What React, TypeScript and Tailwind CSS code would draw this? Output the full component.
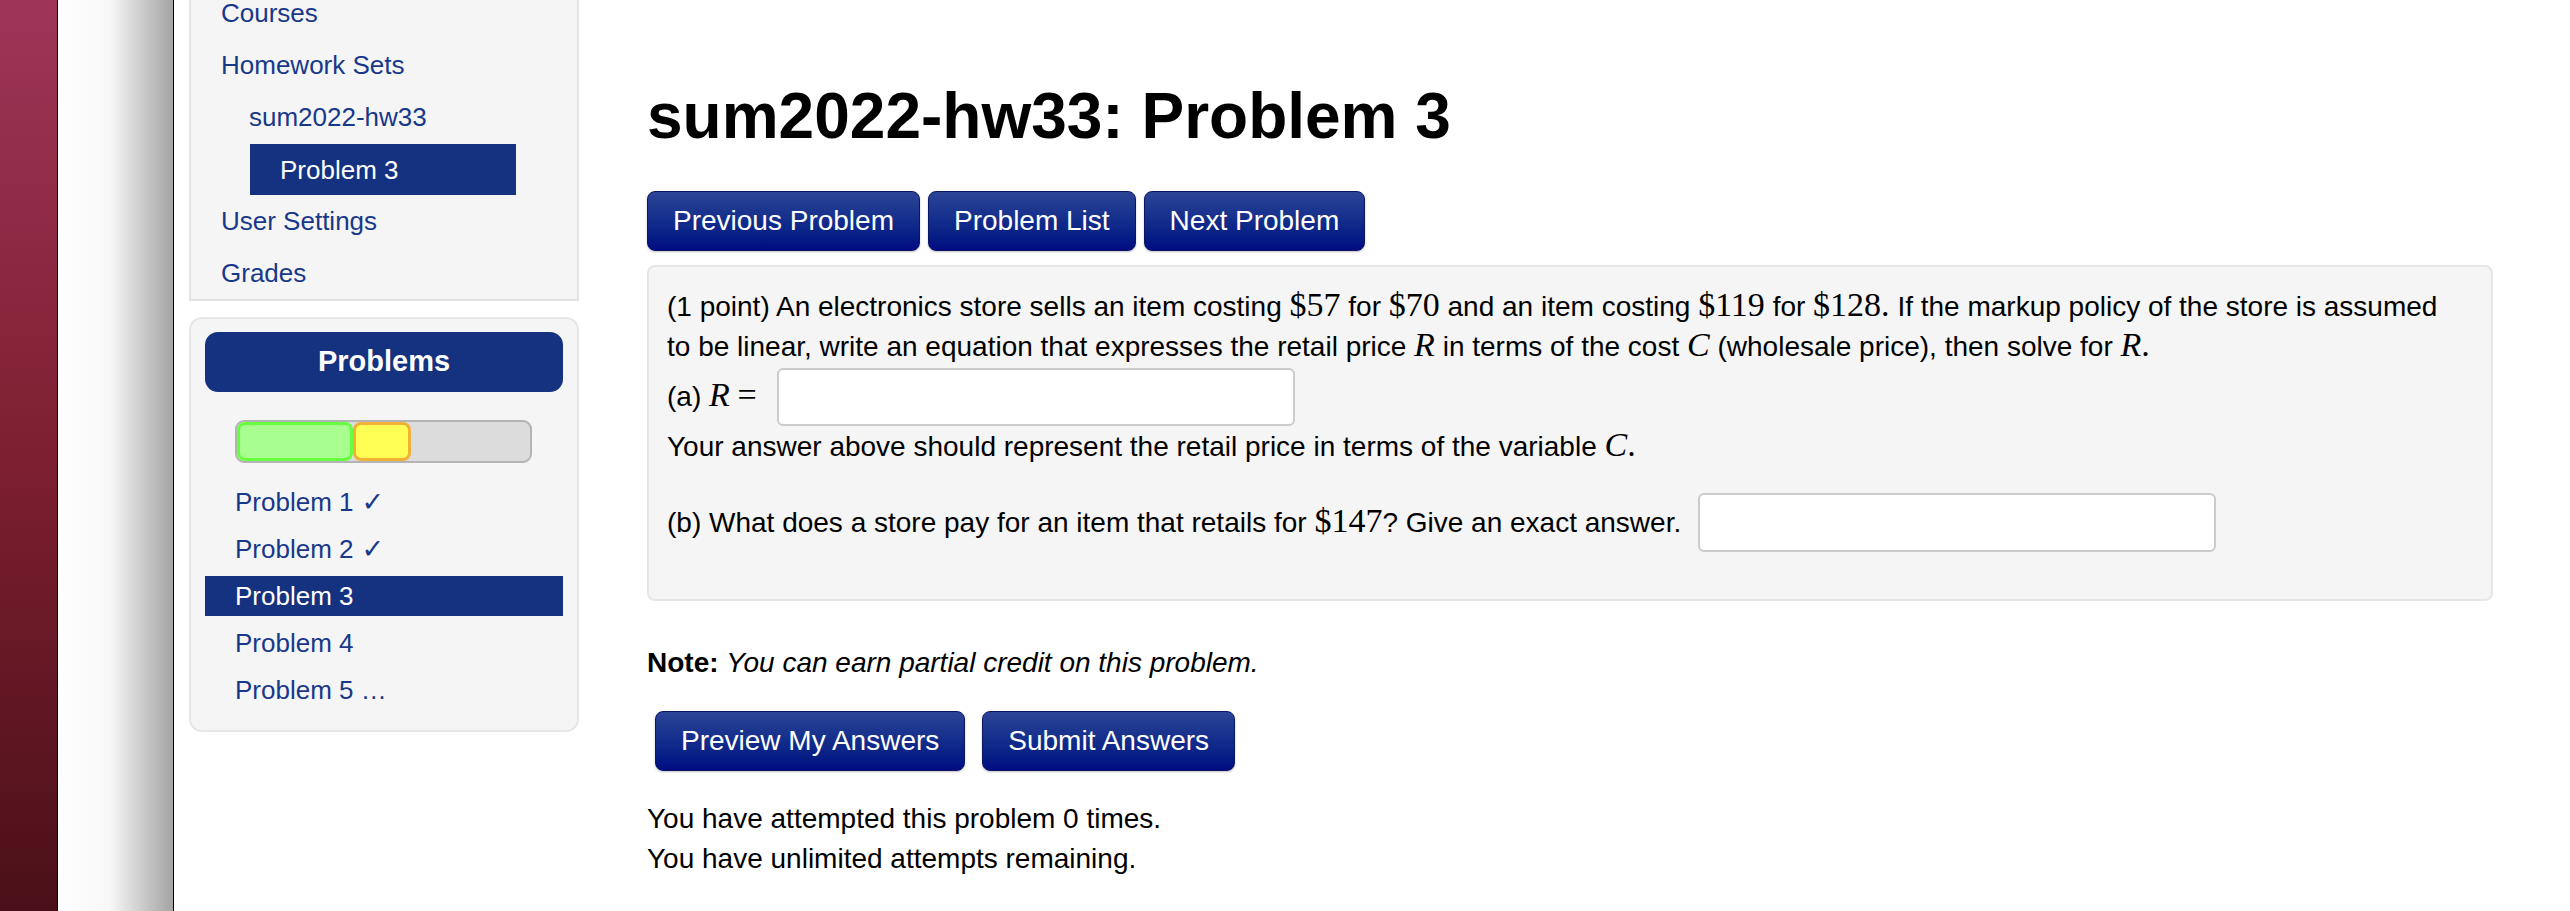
import type { ReactNode } from 'react';

const navLinks = ['Courses', 'Homework Sets'];
const problems = [
  { label: 'Problem 1', done: true, active: false },
  { label: 'Problem 2', done: true, active: false },
  { label: 'Problem 3', done: false, active: true },
  { label: 'Problem 4', done: false, active: false },
  { label: 'Problem 5 …', done: false, active: false },
];

// math in the problem text (MathJax-like serif)
function M({ children }: { children: ReactNode }) {
  return <span className="font-['Liberation_Serif',serif] text-[34px] leading-none">{children}</span>;
}

function MI({ children }: { children: ReactNode }) {
  return <span className="font-['Liberation_Serif',serif] text-[34px] leading-none italic">{children}</span>;
}

function BlueButton({ children }: { children: ReactNode }) {
  return (
    <button className="h-[60px] rounded-[8px] border border-[#0b1764] bg-linear-to-b from-[#2b4496] to-[#020a80] px-[25px] text-[28px] leading-[40px] text-white shadow-[0_1px_2px_rgba(0,0,0,0.25)]">
      {children}
    </button>
  );
}

export default function App() {
  return (
    <div className="flex h-screen w-full overflow-hidden bg-white font-['Liberation_Sans',Helvetica,Arial,sans-serif] text-black">
      {/* desktop edge + window shadow */}
      <div className="w-[58px] shrink-0 border-r border-black bg-linear-to-b from-[#9e3559] via-[#7e1f30] to-[#4a1019]" />
      <div className="w-[116px] shrink-0 border-r border-black bg-linear-to-r from-white via-[#f7f7f7] via-45% to-[#a4a4a4]" />

      <div className="flex flex-1 items-start">
        {/* sidebar */}
        <aside className="ml-[15px] flex w-[390px] shrink-0 flex-col gap-[16px]">
          <nav className="-mt-[13px] border-2 border-t-0 border-[#e3e3e3] bg-[#f5f5f5] text-[26px] leading-[40px] text-[#18388a]">
            {navLinks.map((l) => (
              <div key={l} className="px-[30px] py-[6px]">
                {l}
              </div>
            ))}
            <div className="py-[6px] pl-[58px]">sum2022-hw33</div>
            <div className="ml-[59px] mt-[1px] flex h-[51px] w-[266px] items-center bg-[#14327f] px-[30px] text-white">
              Problem 3
            </div>
            <div className="px-[30px] py-[6px]">User Settings</div>
            <div className="px-[30px] py-[6px]">Grades</div>
          </nav>

          <div className="rounded-[13px] border-2 border-[#e6e6e6] bg-[#f5f5f5] px-[14px] pb-[20px] pt-[13px]">
            <div className="flex h-[60px] items-center justify-center rounded-[13px] bg-[#14327f] text-[29px] font-bold text-white">
              Problems
            </div>
            <div className="ml-[30px] mt-[28px] flex h-[43px] w-[297px] rounded-[9px] border-2 border-[#b4b4b4] bg-[#dcdcdc]">
              <div className="w-[116px] rounded-[8px] border-[3px] border-[#66ff40] bg-[#a8ff90]" />
              <div className="w-[58px] rounded-[8px] border-[3px] border-[#f2b134] bg-[#ffff55]" />
            </div>
            <ul className="mt-[19px] flex flex-col gap-[7px] text-[26px] leading-[40px]">
              {problems.map((p) => (
                <li
                  key={p.label}
                  className={p.active ? 'h-[40px] bg-[#14327f] pl-[30px] text-white' : 'h-[40px] pl-[30px] text-[#18388a]'}
                >
                  {p.label}
                  {p.done && (
                    <span className="ml-[8px] font-['DejaVu_Sans',sans-serif] text-[27px] font-bold leading-none">✓</span>
                  )}
                </li>
              ))}
            </ul>
          </div>
        </aside>

        {/* main */}
        <main className="ml-[68px] flex-1 pr-[77px] text-[28px] leading-[40px]">
          <h1 className="pt-[81px] text-[64px] font-bold leading-[70px]">sum2022-hw33: Problem 3</h1>

          <div className="mt-[40px] flex gap-[8px]">
            <BlueButton>Previous Problem</BlueButton>
            <BlueButton>Problem List</BlueButton>
            <BlueButton>Next Problem</BlueButton>
          </div>

          <div className="mt-[14px] rounded-[8px] border-2 border-[#e6e6e6] bg-[#f5f5f5] px-[18px] pb-[47px] pt-[20px]">
            <p>
              (1 point) An electronics store sells an item costing <M>$57</M> for <M>$70</M> and an item costing{' '}
              <M>$119</M> for <M>$128.</M> If the markup policy of the store is assumed
              <br />
              to be linear, write an equation that expresses the retail price <MI>R</MI> in terms of the cost{' '}
              <MI>C</MI> (wholesale price), then solve for <MI>R</MI>
              <M>.</M>
            </p>
            <div className="flex h-[60px] items-center">
              <span className="w-[110px] shrink-0">
                (a) <MI>R</MI> <M>=</M>
              </span>
              <input className="h-[58px] w-[518px] rounded-[6px] border-2 border-[#cbcbcb] bg-white" />
            </div>
            <p>
              Your answer above should represent the retail price in terms of the variable <MI>C</MI>
              <M>.</M>
            </p>
            <div className="mt-[26px] flex h-[59px] items-center">
              <span>
                (b) What does a store pay for an item that retails for <M>$147</M>? Give an exact answer.
              </span>
              <input className="ml-[17px] h-[59px] w-[518px] rounded-[6px] border-2 border-[#cbcbcb] bg-white" />
            </div>
          </div>

          <p className="mt-[42px]">
            <b>Note:</b> <i>You can earn partial credit on this problem.</i>
          </p>

          <div className="ml-[8px] mt-[28px] flex gap-[17px]">
            <BlueButton>Preview My Answers</BlueButton>
            <BlueButton>Submit Answers</BlueButton>
          </div>

          <div className="mt-[28px]">
            <p>You have attempted this problem 0 times.</p>
            <p>You have unlimited attempts remaining.</p>
          </div>
        </main>
      </div>
    </div>
  );
}
